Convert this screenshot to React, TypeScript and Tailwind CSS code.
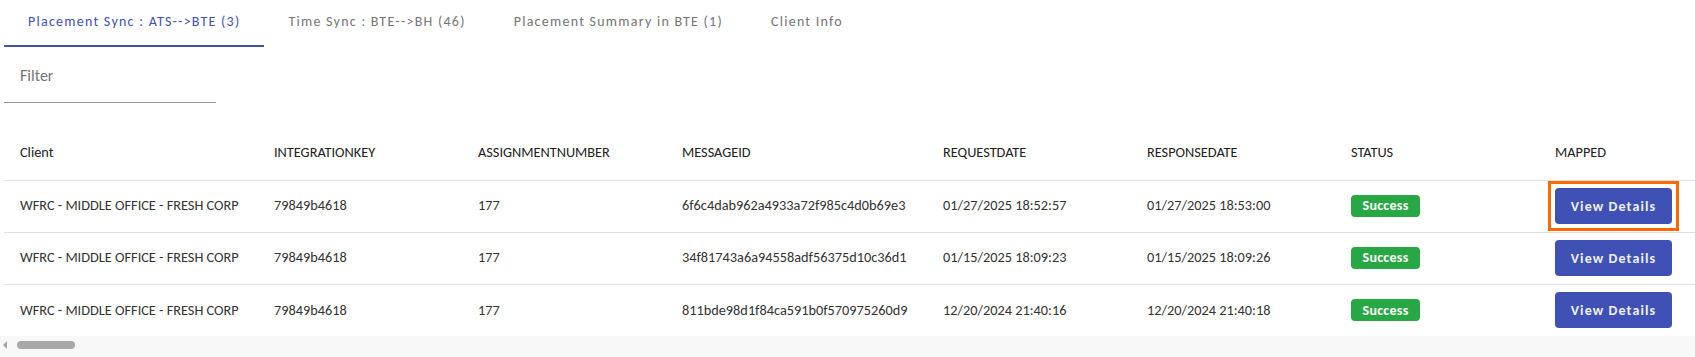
import React from 'react'

const tabs = [
  { label: 'Placement Sync : ATS-->BTE (3)', active: true },
  { label: 'Time Sync : BTE-->BH (46)', active: false },
  { label: 'Placement Summary in BTE (1)', active: false },
  { label: 'Client Info', active: false },
]

const columns = [
  { key: 'client', label: 'Client', w: 'w-[254px]' },
  { key: 'key', label: 'INTEGRATIONKEY', w: 'w-[204px]' },
  { key: 'num', label: 'ASSIGNMENTNUMBER', w: 'w-[204px]' },
  { key: 'msg', label: 'MESSAGEID', w: 'w-[261px]' },
  { key: 'req', label: 'REQUESTDATE', w: 'w-[204px]' },
  { key: 'res', label: 'RESPONSEDATE', w: 'w-[204px]' },
  { key: 'status', label: 'STATUS', w: 'w-[204px]' },
  { key: 'mapped', label: 'MAPPED', w: 'w-[204px]' },
]

const rows = [
  {
    msg: '6f6c4dab962a4933a72f985c4d0b69e3',
    req: '01/27/2025 18:52:57',
    res: '01/27/2025 18:53:00',
    focused: true,
  },
  {
    msg: '34f81743a6a94558adf56375d10c36d1',
    req: '01/15/2025 18:09:23',
    res: '01/15/2025 18:09:26',
    focused: false,
  },
  {
    msg: '811bde98d1f84ca591b0f570975260d9',
    req: '12/20/2024 21:40:16',
    res: '12/20/2024 21:40:18',
    focused: false,
  },
]

export default function App() {
  return (
    <div className="w-[1695px] h-[357px] overflow-hidden bg-white pl-1 font-['Carlito','Lato',sans-serif]">
      {/* Tabs */}
      <div className="flex h-[47px]">
        {tabs.map((t) => (
          <div
            key={t.label}
            className={`px-6 flex items-center text-[14px] tracking-[0.09em] pb-[2px] border-b-2 ${
              t.active ? 'text-[#3f51b5] border-[#3f51b5]' : 'text-[#757575] border-transparent'
            }`}
          >
            {t.label}
          </div>
        ))}
      </div>

      {/* Filter */}
      <div className="w-[212px] h-[56px] border-b border-[#949494] flex items-center pl-4 pt-[2px]">
        <span className="text-[16px] text-[#757575]">Filter</span>
      </div>

      {/* Table */}
      <div className="mt-[20px] overflow-hidden">
        <table className="w-[1800px] table-fixed border-collapse text-[14.3px]">
          <thead>
            <tr className="h-[57px] border-b border-[#e0e0e0]">
              {columns.map((c) => (
                <th key={c.key} className={`${c.w} text-left font-normal text-[#212121] pl-4 pt-[2px]`}>
                  {c.label}
                </th>
              ))}
              <th />
            </tr>
          </thead>
          <tbody className="text-[#333333]">
            {rows.map((r, i) => (
              <tr key={r.msg} className={`h-[52px] ${i < rows.length - 1 ? 'border-b border-[#e0e0e0]' : ''}`}>
                <td className="pl-4">WFRC - MIDDLE OFFICE - FRESH CORP</td>
                <td className="pl-4">79849b4618</td>
                <td className="pl-4">177</td>
                <td className="pl-4">{r.msg}</td>
                <td className="pl-4">{r.req}</td>
                <td className="pl-4">{r.res}</td>
                <td className="pl-4">
                  <span className="inline-flex items-center justify-center w-[69px] h-[22px] -mt-[10px] rounded-[4px] bg-[#28a745] text-white font-bold text-[14px] tracking-[0.02em]">
                    Success
                  </span>
                </td>
                <td className="pl-4">
                  <button className="relative w-[117px] h-[36px] rounded-[4px] bg-[#3f51b5] text-[#eef0fa] font-bold text-[14px] tracking-[0.08em]">
                    View Details
                    {r.focused && (
                      <span className="absolute -inset-[7px] border-[3px] border-[#ff6a00] pointer-events-none" />
                    )}
                  </button>
                </td>
                <td />
              </tr>
            ))}
          </tbody>
        </table>
      </div>

      {/* Horizontal scrollbar */}
      <div className="-ml-1 h-[21px] bg-[#f8f8f8] flex items-start pt-[5px] pl-[3px] gap-[10px]">
        <div className="w-0 h-0 border-y-[4px] border-y-transparent border-r-[4px] border-r-[#a3a3a3]" />
        <div className="w-[58px] h-[8px] rounded-full bg-[#a8a8a8]" />
      </div>
    </div>
  )
}
